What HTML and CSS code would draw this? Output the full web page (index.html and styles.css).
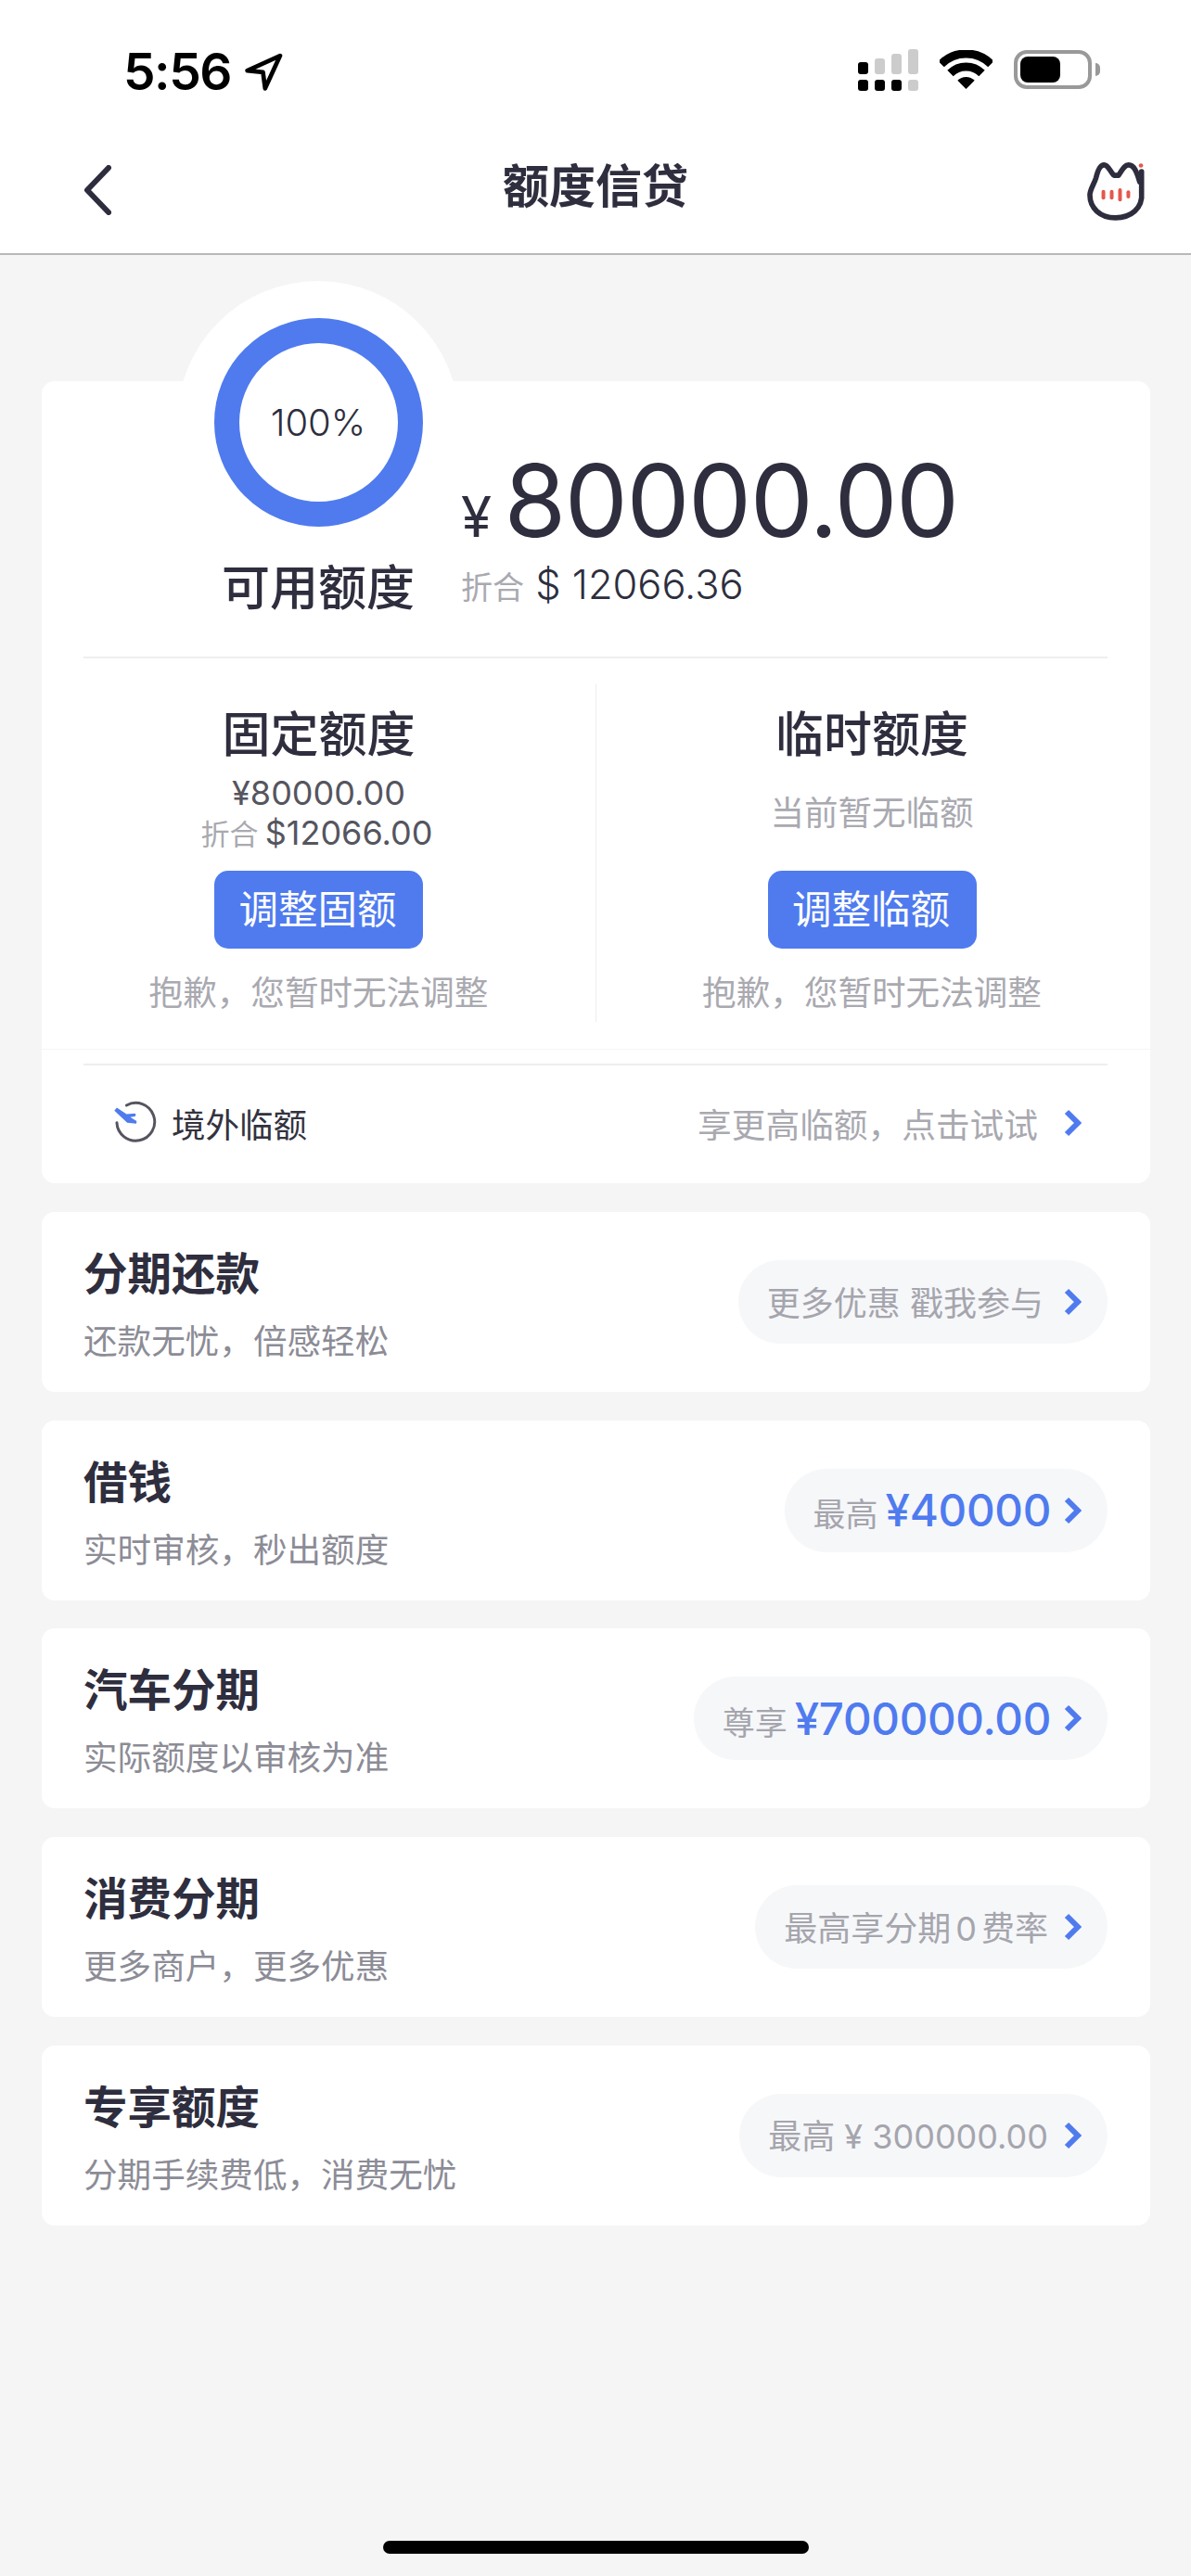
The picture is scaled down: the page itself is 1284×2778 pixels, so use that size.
FILE: index.html
```html
<!DOCTYPE html>
<html lang="zh-CN">
  <head>
    <meta charset="UTF-8" />
    <meta name="viewport" content="width=device-width, initial-scale=1.0" />
    <title>额度信贷</title>
    <link rel="stylesheet" href="styles.css">
  </head>
  <body>
    <div class="page">
      <header class="top">
        <div class="status">
          <div class="status-left">
            <span class="clock">5:56</span>
            <svg class="locate" viewBox="495 110 122 122"><path d="M608 119 L503 167 L553 172 L560 224 Z" fill="none" stroke="#000" stroke-width="14" stroke-linejoin="round" /></svg>
          </div>
          <div class="status-right">
            <div class="signal">
              <i class="bar b1 on"></i><i class="bar b2"></i><i class="bar b3"></i><i class="bar b4"></i>
              <i class="dot on"></i><i class="dot on"></i><i class="dot on"></i><i class="dot"></i>
            </div>
            <svg class="wifi" viewBox="0 0 57 42">
              <path d="M1.6 15.1 A38 38 0 0 1 55.4 15.1" fill="none" stroke="#000" stroke-width="9" />
              <path d="M11.5 25 A24 24 0 0 1 45.5 25" fill="none" stroke="#000" stroke-width="9" />
              <path d="M28.5 42 L19.3 32.8 A13 13 0 0 1 37.7 32.8 Z" />
            </svg>
            <div class="battery"><div class="battery-level"></div></div>
            <div class="battery-cap"></div>
          </div>
        </div>
        <nav class="nav">
          <svg class="back" viewBox="0 0 30 54"><path d="M27 3 L4 27 L27 51" fill="none" stroke="#2d2d3d" stroke-width="6" stroke-linecap="round" stroke-linejoin="round" /></svg>
          <h1 class="nav-title">额度信贷</h1>
          <svg class="cat" viewBox="150 66 196 198">
            <path d="M330 102 V168 C335 222 295 252 245 252 C195 252 162 220 162 178 C162 160 176 142 182 122 C188 96 195 80 208 80 C222 80 228 102 240 114 H255 C265 102 272 80 288 80 C305 80 315 102 324 136" fill="none" stroke="#2d2d3d" stroke-width="17" stroke-linecap="round" stroke-linejoin="round" />
            <circle cx="328" cy="82" r="7" fill="#e4574c" />
            <rect x="200" y="161" width="12" height="32" rx="6" fill="#e4574c" />
            <rect x="227" y="161" width="12" height="32" rx="6" fill="#e4574c" />
            <rect x="254" y="156" width="12" height="43" rx="6" fill="#e4574c" />
            <rect x="281" y="163" width="12" height="26" rx="6" fill="#e4574c" />
          </svg>
        </nav>
      </header>

      <main class="content">
        <section class="card main-card">
          <div class="summary">
            <div class="summary-left">
              <div class="halo">
                <div class="ring">100%</div>
              </div>
              <div class="summary-label">可用额度</div>
            </div>
            <div class="summary-right">
              <div class="amount"><span class="amount-sign">¥</span>80000.00</div>
              <div class="converted"><span class="muted">折合</span> $ 12066.36</div>
            </div>
          </div>

          <div class="line"></div>

          <div class="split">
            <div class="split-col">
              <h2 class="split-title">固定额度</h2>
              <div class="fixed-value">¥80000.00</div>
              <div class="fixed-converted"><span class="muted">折合</span> $12066.00</div>
              <button class="adjust">调整固额</button>
              <p class="note">抱歉，您暂时无法调整</p>
            </div>
            <div class="split-col has-border">
              <h2 class="split-title">临时额度</h2>
              <div class="temp-empty">当前暂无临额</div>
              <button class="adjust">调整临额</button>
              <p class="note">抱歉，您暂时无法调整</p>
            </div>
          </div>

          <div class="hairline"></div>
          <div class="line"></div>

          <div class="abroad">
            <div class="abroad-left">
              <svg class="plane" viewBox="186 84 146 144">
                <path d="M230 98 A62 62 0 1 1 198 155" fill="none" stroke="#55555f" stroke-width="9" stroke-linecap="round" />
                <path d="M190 116 L198 106 L230 127 L257 125 Q264 129 257 135 L242 137 L263 150 L262 158 L232 155 Z" fill="#4f7bef" />
              </svg>
              <span>境外临额</span>
            </div>
            <div class="abroad-right">
              <span>享更高临额，点击试试</span>
              <svg class="chevron" viewBox="0 0 19 30"><path d="M3 3 L15 15 L3 27" fill="none" stroke="#4f7bef" stroke-width="6" /></svg>
            </div>
          </div>
        </section>

        <section class="card row">
          <div>
            <h3 class="row-title">分期还款</h3>
            <p class="row-sub">还款无忧，倍感轻松</p>
          </div>
          <div class="pill">
            <span class="pill-text">更多优惠 戳我参与</span>
            <svg class="chevron" viewBox="0 0 19 30"><path d="M3 3 L15 15 L3 27" fill="none" stroke="#4f7bef" stroke-width="6" /></svg>
          </div>
        </section>

        <section class="card row">
          <div>
            <h3 class="row-title">借钱</h3>
            <p class="row-sub">实时审核，秒出额度</p>
          </div>
          <div class="pill pill-tight">
            <span>最高<b class="blue">¥40000</b></span>
            <svg class="chevron" viewBox="0 0 19 30"><path d="M3 3 L15 15 L3 27" fill="none" stroke="#4f7bef" stroke-width="6" /></svg>
          </div>
        </section>

        <section class="card row">
          <div>
            <h3 class="row-title">汽车分期</h3>
            <p class="row-sub">实际额度以审核为准</p>
          </div>
          <div class="pill pill-tight">
            <span>尊享<b class="blue">¥700000.00</b></span>
            <svg class="chevron" viewBox="0 0 19 30"><path d="M3 3 L15 15 L3 27" fill="none" stroke="#4f7bef" stroke-width="6" /></svg>
          </div>
        </section>

        <section class="card row">
          <div>
            <h3 class="row-title">消费分期</h3>
            <p class="row-sub">更多商户，更多优惠</p>
          </div>
          <div class="pill pill-slight">
            <span class="pill-text">最高享分期<em class="zero">0</em>费率</span>
            <svg class="chevron" viewBox="0 0 19 30"><path d="M3 3 L15 15 L3 27" fill="none" stroke="#4f7bef" stroke-width="6" /></svg>
          </div>
        </section>

        <section class="card row">
          <div>
            <h3 class="row-title">专享额度</h3>
            <p class="row-sub">分期手续费低，消费无忧</p>
          </div>
          <div class="pill pill-slight">
            <span class="pill-text">最高 ¥ 300000.00</span>
            <svg class="chevron" viewBox="0 0 19 30"><path d="M3 3 L15 15 L3 27" fill="none" stroke="#4f7bef" stroke-width="6" /></svg>
          </div>
        </section>
      </main>

      <div class="home-bar"></div>
    </div>
  </body>
</html>
```
FILE: styles.css
```css
body {
  margin: 0;
  font-family: Inter, "Noto Sans CJK SC", sans-serif;
  color: #2e2e3e;
}
h1, h2, h3, p {
  margin: 0;
}

.page {
  display: flex;
  flex-direction: column;
  height: 2778px;
  overflow: hidden;
  background-color: #f5f5f5;
}

/* top bar */
.top {
  height: 273px;
  background-color: #fff;
  border-bottom: 2px solid #b8b8b8;
}
.status {
  display: flex;
  justify-content: space-between;
  height: 140px;
}
.status-left {
  display: flex;
  align-items: flex-start;
  padding: 47px 0 0 133px;
}
.clock {
  font-size: 55px;
  line-height: 60px;
  font-weight: 600;
  letter-spacing: -1.5px;
  color: #000;
}
.locate {
  width: 41px;
  height: 41px;
  margin: 10px 0 0 15px;
}
.status-right {
  display: flex;
  align-items: flex-start;
  padding: 53px 98px 0 0;
}
.signal {
  display: grid;
  grid-template-columns: repeat(4, 11px);
  grid-template-rows: 27px 12px;
  column-gap: 7px;
  row-gap: 6px;
  align-items: end;
}
.bar, .dot {
  display: block;
  background-color: #ccc;
  border-radius: 3px;
}
.bar.on, .dot.on {
  background-color: #000;
}
.dot { height: 12px; }
.b1 { height: 13px; }
.b2 { height: 17px; }
.b3 { height: 22px; }
.b4 { height: 27px; }
.wifi {
  width: 57px;
  height: 42px;
  margin: 1px 0 0 23px;
}
.battery {
  box-sizing: border-box;
  width: 84px;
  height: 42px;
  margin: 1px 0 0 23px;
  padding: 3px;
  border: 4px solid #999;
  border-radius: 14px;
}
.battery-level {
  width: 43px;
  height: 100%;
  background-color: #000;
  border-radius: 8px;
}
.battery-cap {
  width: 5px;
  height: 14px;
  margin: 15px 0 0 4px;
  background-color: #999;
  border-radius: 0 7px 7px 0;
}

.nav {
  position: relative;
  display: flex;
  align-items: center;
  justify-content: space-between;
  height: 120px;
  padding: 0 48px 0 90px;
}
.back {
  width: 30px;
  height: 54px;
  margin-top: 10px;
}
.nav-title {
  position: absolute;
  left: 0;
  right: 0;
  top: 26px;
  text-align: center;
  font-size: 50px;
  line-height: 70px;
  font-weight: 600;
}
.cat {
  width: 65px;
  height: 66px;
  margin-top: 11px;
}

/* cards */
.content {
  padding: 136px 44px 0 45px;
}
.card {
  background-color: #fff;
  border-radius: 14px;
}
.main-card {
  height: 865px;
  margin-bottom: 31px;
}

.summary {
  display: flex;
  height: 297px;
}
.summary-left {
  width: 304px;
  margin-left: 146px;
  text-align: center;
}
.halo {
  display: flex;
  align-items: center;
  justify-content: center;
  width: 304px;
  height: 304px;
  margin-top: -108px;
  background-color: #fff;
  border-radius: 50%;
}
.ring {
  box-sizing: border-box;
  display: flex;
  align-items: center;
  justify-content: center;
  width: 225px;
  height: 225px;
  border: 27px solid #4f7bef;
  border-radius: 50%;
  font-size: 40px;
  font-weight: 300;
}
.summary-label {
  margin-top: -7px;
  font-size: 52px;
  line-height: 70px;
  font-weight: 500;
}
.summary-right {
  margin-left: 2px;
}
.amount {
  margin-top: 64px;
  font-size: 108px;
  line-height: 130px;
  letter-spacing: -1.5px;
}
.amount-sign {
  margin-right: 15px;
  font-size: 60px;
}
.converted {
  margin-top: -20px;
  font-size: 43.4px;
  line-height: 56px;
  font-weight: 300;
}
.muted {
  font-size: 34px;
  font-weight: 400;
  color: #a9a9b0;
}

.line {
  height: 2px;
  margin: 0 46px 0 45px;
  background-color: #eee;
}
.hairline {
  height: 1px;
  margin-top: 29px;
  margin-bottom: 15px;
  background-color: #f6f6f6;
}

.split {
  display: grid;
  grid-template-columns: 597px 1fr;
  height: 364px;
  margin-top: 28px;
}
.split-col {
  display: flex;
  flex-direction: column;
  align-items: center;
}
.has-border {
  padding-right: 3px;
  border-left: 1px solid #eee;
}
.split-title {
  margin-top: 20px;
  font-size: 52px;
  line-height: 70px;
  font-weight: 500;
}
.fixed-value {
  margin-top: 4px;
  font-size: 36px;
  line-height: 46px;
  font-weight: 400;
  color: #55555f;
}
.fixed-converted {
  margin-bottom: -1px;
  padding-right: 4px;
  font-size: 36px;
  line-height: 40px;
  word-spacing: -3px;
  color: #55555f;
}
.fixed-converted .muted {
  font-size: 31px;
}
.temp-empty {
  margin-top: 19px;
  height: 72px;
  font-size: 36.5px;
  line-height: 60px;
  color: #a9a9b0;
}
.adjust {
  width: 225px;
  height: 84px;
  margin-top: 20px;
  padding: 0 2px 8px 0;
  border: none;
  border-radius: 15px;
  background-color: #4f7bef;
  color: #fff;
  font-family: inherit;
  font-size: 42.5px;
}
.note {
  margin-top: 22px;
  font-size: 36.6px;
  line-height: 52px;
  color: #a9a9b0;
}

.abroad {
  display: flex;
  align-items: center;
  justify-content: space-between;
  height: 124px;
  padding: 0 74px 0 77px;
  font-size: 36.5px;
}
.abroad-left {
  display: flex;
  align-items: center;
  gap: 15px;
  color: #33333f;
}
.plane {
  width: 48px;
  height: 48px;
}
.abroad-right {
  display: flex;
  align-items: center;
  gap: 28px;
  color: #a9a9b0;
  font-size: 36.7px;
}
.chevron {
  display: block;
  width: 19px;
  height: 30px;
}

.row {
  display: flex;
  align-items: center;
  justify-content: space-between;
  box-sizing: border-box;
  height: 194px;
  margin-bottom: 30.7px;
  padding: 0 46px 0 45px;
}
.row-title {
  margin-top: 7px;
  font-size: 47.5px;
  line-height: 62px;
  font-weight: 600;
}
.row-sub {
  margin-top: 17px;
  font-size: 36.6px;
  line-height: 50px;
  color: #8c8c96;
}
.pill {
  display: flex;
  align-items: center;
  gap: 22px;
  height: 90px;
  padding: 0 28px 0 31px;
  border-radius: 45px;
  background-color: #f6f7f9;
  font-size: 36px;
  color: #a5a5ad;
}
.pill-text {
  margin-bottom: 3px;
}
.pill-tight {
  gap: 14px;
  font-size: 35px;
}
.pill-slight {
  gap: 17px;
}
.blue {
  margin-left: 8px;
  font-size: 47.5px;
  font-weight: 500;
  letter-spacing: -0.3px;
  color: #4f7bef;
}
.zero {
  margin: 0 5px;
  font-style: normal;
}

.home-bar {
  width: 459px;
  height: 14px;
  margin: auto auto 24px;
  background-color: #000;
  border-radius: 7px;
}
```
